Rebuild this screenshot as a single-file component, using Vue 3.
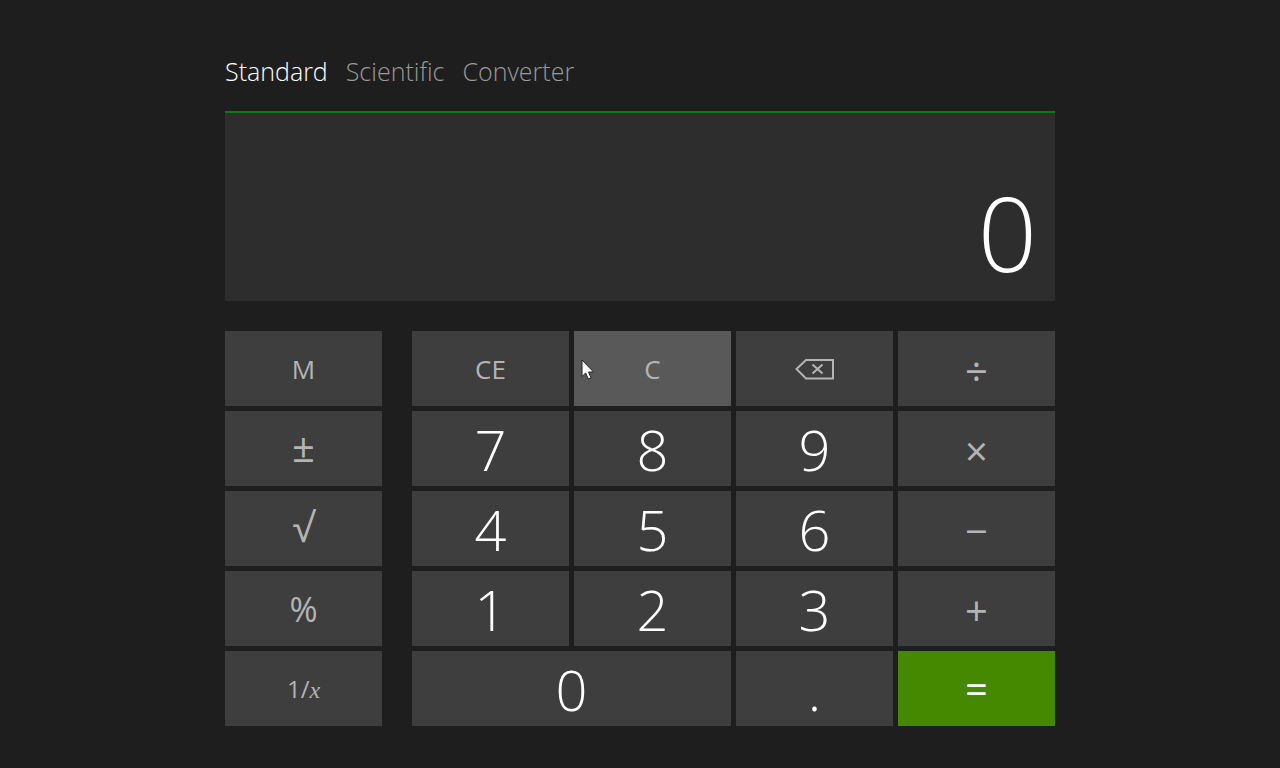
<script setup>
import { ref } from 'vue'

const modes = ['Standard', 'Scientific', 'Converter']
const mode = ref('Standard')
const value = ref('0')

const keys = [
  { text: 'M', name: 'Memory', kind: 'word side' },
  { text: 'CE', name: 'Clear entry', kind: 'word' },
  { text: 'C', name: 'Clear', kind: 'word hovered', pointer: true },
  { icon: 'backspace', name: 'Backspace', kind: 'word' },
  { text: '÷', name: 'Divide', kind: 'operator' },
  { text: '±', name: 'Plus minus', kind: 'symbol side' },
  { text: '7', kind: 'digit' },
  { text: '8', kind: 'digit' },
  { text: '9', kind: 'digit' },
  { text: '×', name: 'Multiply', kind: 'operator' },
  { text: '√', name: 'Square root', kind: 'symbol side' },
  { text: '4', kind: 'digit' },
  { text: '5', kind: 'digit' },
  { text: '6', kind: 'digit' },
  { text: '−', name: 'Subtract', kind: 'operator' },
  { text: '%', name: 'Percent', kind: 'percent side' },
  { text: '1', kind: 'digit' },
  { text: '2', kind: 'digit' },
  { text: '3', kind: 'digit' },
  { text: '+', name: 'Add', kind: 'operator' },
  { text: '1/', variable: 'x', name: 'Reciprocal', kind: 'fraction side' },
  { text: '0', kind: 'digit wide' },
  { text: '.', name: 'Decimal point', kind: 'digit' },
  { text: '=', name: 'Equals', kind: 'equals' },
]

function press(key) {
  if (key.text === 'C' || key.text === 'CE') value.value = '0'
  else if (key.icon) value.value = value.value.slice(0, -1) || '0'
  else if (key.text === '.') value.value += value.value.includes('.') ? '' : '.'
  else if (key.kind.startsWith('digit')) value.value = value.value === '0' ? key.text : value.value + key.text
}
</script>

<template>
  <main class="calculator">
    <nav class="modes" aria-label="Calculator mode">
      <button
        v-for="m in modes"
        :key="m"
        type="button"
        class="mode"
        :class="{ active: m === mode }"
        @click="mode = m"
      >{{ m }}</button>
    </nav>
    <output class="display" aria-label="Result">{{ value }}</output>
    <div class="keypad">
      <button
        v-for="key in keys"
        :key="key.name || key.text"
        type="button"
        class="key"
        :class="key.kind"
        :aria-label="key.name || key.text"
        @click="press(key)"
      >
        <svg v-if="key.icon" class="backspace" viewBox="0 0 40 22" aria-hidden="true">
          <path d="M1.500 11 L11 2 H38 V20.500 H11 Z" />
          <path d="M17.500 6.500 L27.500 15.500 M27.500 6.500 L17.500 15.500" />
        </svg>
        <span v-else>{{ key.text }}<i v-if="key.variable" class="variable">{{ key.variable }}</i></span>
        <svg v-if="key.pointer" class="pointer" viewBox="0 0 14 22" aria-hidden="true">
          <path d="M1 1 V17.500 L4.700 14 L7.300 20 L10 18.800 L7.500 13 H12.500 Z" />
        </svg>
      </button>
    </div>
  </main>
</template>

<style>
body {
  margin: 0;
  background: #1e1e1e;
}
</style>

<style scoped>
.calculator {
  box-sizing: border-box;
  min-height: 100vh;
  padding: 51px 225px 42px;
  background: #1e1e1e;
  color: #fff;
  font-family: "Open Sans", "Noto Sans", sans-serif;
  font-weight: 300;
}

button {
  margin: 0;
  padding: 0;
  border: 0;
  font: inherit;
  color: inherit;
  cursor: pointer;
}

.modes {
  display: flex;
  gap: 18px;
  padding-bottom: 20px;
}

.mode {
  background: none;
  color: #999;
  font-size: 25px;
  line-height: 40px;
}

.mode.active {
  color: #fff;
}

.display {
  box-sizing: border-box;
  display: flex;
  align-items: flex-end;
  justify-content: flex-end;
  height: 190px;
  padding: 0 18px 3px;
  border-top: 2px solid #117a17;
  background: #2d2d2d;
  font-size: 104px;
  line-height: 132px;
}

.keypad {
  display: grid;
  grid-template-columns: 1fr 20px repeat(4, 1fr);
  grid-auto-rows: 75px;
  gap: 5px;
  margin-top: 30px;
}

.key {
  position: relative;
  display: flex;
  align-items: center;
  justify-content: center;
  background: #3e3e3e;
  color: #b4b4b4;
  font-weight: 400;
}

.side {
  grid-column: 1 / span 2;
  margin-right: 25px;
}

.wide {
  grid-column: span 2;
}

.word {
  font-size: 26px;
}

.digit {
  color: #fff;
  font-size: 56px;
  font-weight: 300;
}

.symbol,
.operator,
.equals {
  font-size: 40px;
}

.symbol {
  padding-bottom: 4px;
}

.operator {
  padding-top: 4px;
}

.percent {
  font-size: 34px;
}

.fraction {
  font-size: 24px;
}

.variable {
  font-family: "Liberation Serif", serif;
}

.hovered {
  background: #595959;
}

.equals {
  background: #458900;
  color: #fff;
}

.backspace {
  width: 40px;
  height: 22px;
  fill: none;
  stroke: #b4b4b4;
  stroke-width: 2;
}

.pointer {
  position: absolute;
  top: 28px;
  left: 7px;
  width: 14px;
  height: 22px;
  fill: #fff;
  stroke: #222;
  stroke-width: 1;
}

@media (max-width: 900px) {
  .calculator {
    padding-inline: 24px;
  }
}
</style>
